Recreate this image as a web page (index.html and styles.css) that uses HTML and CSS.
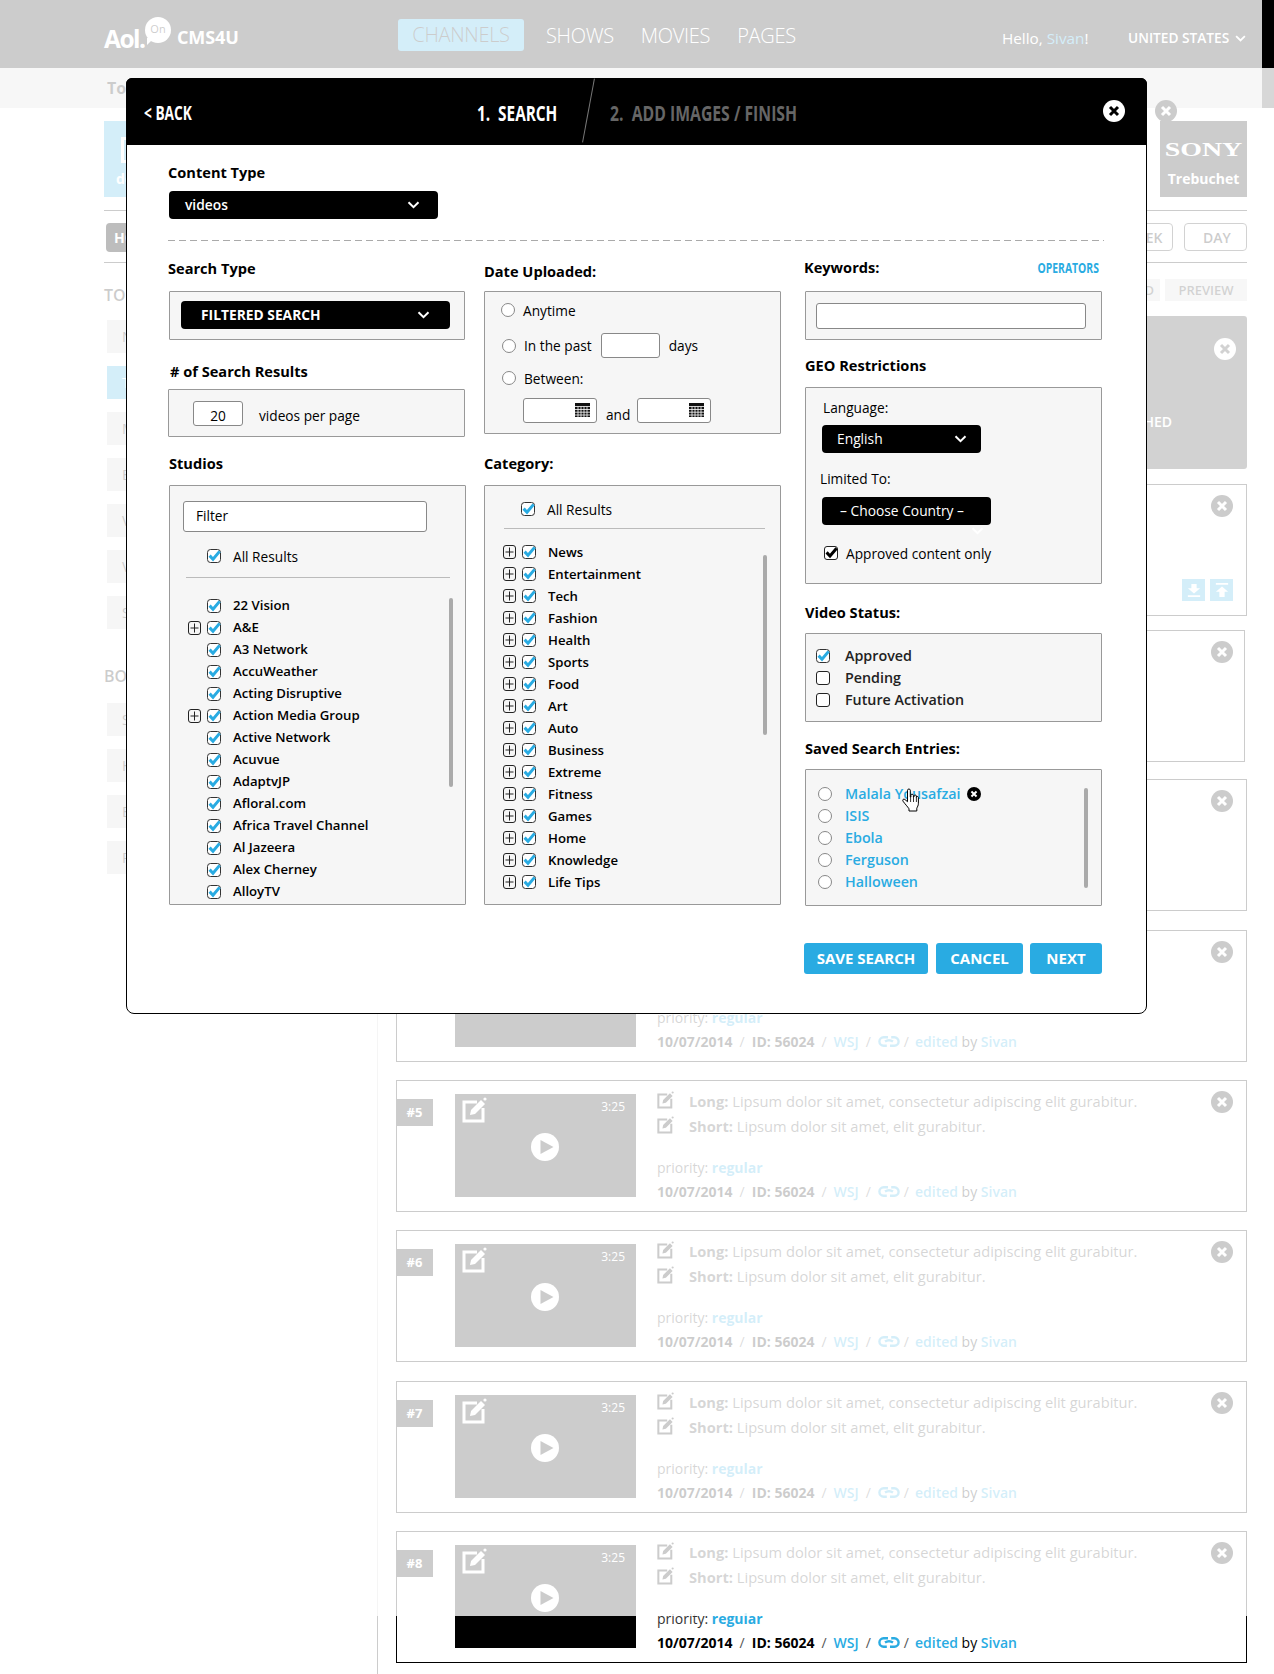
FILE: index.html
```html
<!DOCTYPE html>
<html lang="en">
<head>
<meta charset="utf-8">
<title>CMS4U</title>
<link rel="stylesheet" href="styles.css">
</head>
<body>
<svg class="defs" width="0" height="0" aria-hidden="true">
  <symbol id="chev" viewBox="0 0 12 8"><path d="M1 1.2l5 5 5-5" fill="none" stroke="currentColor" stroke-width="2"/></symbol>
  <symbol id="chk" viewBox="0 0 14 14"><rect x=".5" y=".5" width="13" height="13" rx="3" fill="#fff" stroke="#333"/><path d="M2.6 6.6l3.4 3.6 6.6-7.8" fill="none" stroke="#29abe2" stroke-width="3"/></symbol>
  <symbol id="chkb" viewBox="0 0 14 14"><rect x=".5" y=".5" width="13" height="13" rx="2.5" fill="#fff" stroke="#222"/><path d="M2.6 6.4l3.4 3.6 6.6-7.8" fill="none" stroke="#000" stroke-width="3"/></symbol>
  <symbol id="plus" viewBox="0 0 13 14"><rect x=".5" y=".5" width="12" height="13" rx="2.5" fill="none" stroke="#222"/><path d="M6.5 2.5v9M2.5 7h8" stroke="#222"/></symbol>
  <symbol id="cal" viewBox="0 0 15 14"><rect width="15" height="14" fill="#111"/><path d="M0 3.5h15M0 6.5h15M0 9.2h15M0 12h15M3 3.5V14M6 3.5V14M9 3.5V14M12 3.5V14" stroke="#fff" stroke-width=".8"/></symbol>
  <symbol id="close" viewBox="0 0 22 22"><circle cx="11" cy="11" r="11" fill="currentColor"/><path d="M7 7l8 8M15 7l-8 8" stroke="var(--x,#fff)" stroke-width="3"/></symbol>
  <symbol id="edit" viewBox="0 0 25 26"><path d="M15 5H2v19h19V11" fill="none" stroke="currentColor" stroke-width="3"/><path d="M8 18l1-5L19 3l4 4-10 10z" fill="currentColor"/><circle cx="23" cy="2" r="1.6" fill="currentColor"/></symbol>
  <symbol id="play" viewBox="0 0 28 28"><circle cx="14" cy="14" r="14" fill="#fff"/><path d="M9.500 7l13 7-13 7z" fill="#000"/></symbol>
  <symbol id="link" viewBox="0 0 22 11"><path d="M10 1.300H5.600a4.200 4.200 0 000 8.400h3.200M12 9.700h4.400a4.200 4.200 0 000-8.400h-3.200M7 5.500c3-2 5-2 8 0" fill="none" stroke="#29abe2" stroke-width="2.400"/></symbol>
  <symbol id="hand" viewBox="0 0 18 24"><path d="M5.500 2.200c0-1.600 2.800-1.600 2.800 0V9h.6V7.300c0-1.400 2.500-1.400 2.500 0V9h.6V8c0-1.300 2.400-1.300 2.400 0v1.200c0-1 2-1 2 .3v5.700c0 2.400-1 3.600-1.600 5V23H7v-2.200C5.500 18.500 3 16 1 13.200c-.9-1.400.6-2.800 1.900-1.700l2.600 2.200z" fill="#fff" stroke="#000"/><path d="M8.600 9v5M11.500 9v5M14.400 9v5" stroke="#000" stroke-width=".8"/></symbol>
  <symbol id="down" viewBox="0 0 16 16"><path d="M5 1h6v5h4l-7 6-7-6h4zM1 14h14v2H1z" fill="#fff"/></symbol>
  <symbol id="up" viewBox="0 0 16 16"><path d="M1 0h14v2H1zM8 4l7 6h-4v6H5v-6H1z" fill="#fff"/></symbol>
</svg>

<header class="topbar">
  <div class="logo">
    <span class="logo-aol">Aol.</span>
    <span class="logo-bubble">On</span>
    <span class="logo-cms">CMS4U</span>
  </div>
  <nav class="nav">
    <a class="nav-item nav-active">CHANNELS</a>
    <a class="nav-item">SHOWS</a>
    <a class="nav-item">MOVIES</a>
    <a class="nav-item">PAGES</a>
  </nav>
  <div class="hello">Hello, <span class="blue">Sivan</span>!</div>
  <div class="country">UNITED STATES <svg class="country-chev"><use href="#chev"/></svg></div>
</header>

<div class="subbar"><span>Top Stories</span></div>

<div class="strip">
  <div class="brand brand-active"><span class="brand-box"></span><span class="brand-name">default</span></div>
  <div class="brand brand-sony"><span class="sony">SONY</span><span class="brand-name">Trebuchet</span>
    <svg class="brand-close"><use href="#close"/></svg>
  </div>
</div>
<div class="tabs">
  <span class="pill">HOME</span>
  <span class="tab-right">
    <span class="outline outline-week">WEEK</span>
    <span class="outline outline-day">DAY</span>
  </span>
</div>

<main class="columns">
  <aside class="side">
    <h3 class="side-title">TOP</h3>
    <a class="side-item">News</a>
    <a class="side-item side-active">Tech</a>
    <a class="side-item">Movies</a>
    <a class="side-item">Ent</a>
    <a class="side-item">Video</a>
    <a class="side-item">Viral</a>
    <a class="side-item">Sports</a>
    <h3 class="side-title side-title-2">BOTTOM</h3>
    <a class="side-item">Style</a>
    <a class="side-item">Health</a>
    <a class="side-item">Eat</a>
    <a class="side-item">Recipes</a>
  </aside>

  <section class="feed">
    <div class="actions"><span class="action action-save">SAVED</span><span class="action action-preview">PREVIEW</span></div>
    <div class="hero"><svg class="hero-close"><use href="#close"/></svg><span class="hero-text">PUBLISHED</span></div>

    <article class="card card-first card-upload">
      <svg class="card-close"><use href="#close"/></svg>
      <span class="upload"><span class="upload-btn"><svg><use href="#down"/></svg></span><span class="upload-btn"><svg><use href="#up"/></svg></span></span>
    </article>
    <article class="card card-narrow gap-14">
      <svg class="card-close"><use href="#close"/></svg>
    </article>
    <article class="card gap-17">
      <svg class="card-close"><use href="#close"/></svg>
    </article>
    <article class="card gap-19">
      <div class="thumb thumb-covered"></div>
      <div class="info info-covered">
        <p class="priority">priority: <b class="blue">regular</b></p>
        <p class="meta"><b>10/07/2014</b><i>/</i><b>ID: 56024</b><i>/</i><b class="blue">WSJ</b><i>/</i><svg class="meta-link"><use href="#link"/></svg><i class="tight">/</i><b class="blue">edited</b>&nbsp;by&nbsp;<b class="blue">Sivan</b></p>
      </div>
      <svg class="card-close"><use href="#close"/></svg>
    </article>
    <article class="card">
      <span class="badge">#5</span>
      <div class="thumb"><svg class="thumb-edit"><use href="#edit"/></svg><span class="time">3:25</span><svg class="thumb-play"><use href="#play"/></svg></div>
      <div class="info">
        <p class="line"><svg class="line-edit"><use href="#edit"/></svg><b>Long:</b>&nbsp;Lipsum dolor sit amet, consectetur adipiscing elit gurabitur.</p>
        <p class="line"><svg class="line-edit"><use href="#edit"/></svg><b>Short:</b>&nbsp;Lipsum dolor sit amet, elit gurabitur.</p>
        <p class="priority">priority: <b class="blue">regular</b></p>
        <p class="meta"><b>10/07/2014</b><i>/</i><b>ID: 56024</b><i>/</i><b class="blue">WSJ</b><i>/</i><svg class="meta-link"><use href="#link"/></svg><i class="tight">/</i><b class="blue">edited</b>&nbsp;by&nbsp;<b class="blue">Sivan</b></p>
      </div>
      <svg class="card-close"><use href="#close"/></svg>
    </article>
    <article class="card">
      <span class="badge">#6</span>
      <div class="thumb"><svg class="thumb-edit"><use href="#edit"/></svg><span class="time">3:25</span><svg class="thumb-play"><use href="#play"/></svg></div>
      <div class="info">
        <p class="line"><svg class="line-edit"><use href="#edit"/></svg><b>Long:</b>&nbsp;Lipsum dolor sit amet, consectetur adipiscing elit gurabitur.</p>
        <p class="line"><svg class="line-edit"><use href="#edit"/></svg><b>Short:</b>&nbsp;Lipsum dolor sit amet, elit gurabitur.</p>
        <p class="priority">priority: <b class="blue">regular</b></p>
        <p class="meta"><b>10/07/2014</b><i>/</i><b>ID: 56024</b><i>/</i><b class="blue">WSJ</b><i>/</i><svg class="meta-link"><use href="#link"/></svg><i class="tight">/</i><b class="blue">edited</b>&nbsp;by&nbsp;<b class="blue">Sivan</b></p>
      </div>
      <svg class="card-close"><use href="#close"/></svg>
    </article>
    <article class="card gap-19">
      <span class="badge">#7</span>
      <div class="thumb"><svg class="thumb-edit"><use href="#edit"/></svg><span class="time">3:25</span><svg class="thumb-play"><use href="#play"/></svg></div>
      <div class="info">
        <p class="line"><svg class="line-edit"><use href="#edit"/></svg><b>Long:</b>&nbsp;Lipsum dolor sit amet, consectetur adipiscing elit gurabitur.</p>
        <p class="line"><svg class="line-edit"><use href="#edit"/></svg><b>Short:</b>&nbsp;Lipsum dolor sit amet, elit gurabitur.</p>
        <p class="priority">priority: <b class="blue">regular</b></p>
        <p class="meta"><b>10/07/2014</b><i>/</i><b>ID: 56024</b><i>/</i><b class="blue">WSJ</b><i>/</i><svg class="meta-link"><use href="#link"/></svg><i class="tight">/</i><b class="blue">edited</b>&nbsp;by&nbsp;<b class="blue">Sivan</b></p>
      </div>
      <svg class="card-close"><use href="#close"/></svg>
    </article>
    <article class="card">
      <span class="badge">#8</span>
      <div class="thumb"><svg class="thumb-edit"><use href="#edit"/></svg><span class="time">3:25</span><svg class="thumb-play"><use href="#play"/></svg></div>
      <div class="info">
        <p class="line"><svg class="line-edit"><use href="#edit"/></svg><b>Long:</b>&nbsp;Lipsum dolor sit amet, consectetur adipiscing elit gurabitur.</p>
        <p class="line"><svg class="line-edit"><use href="#edit"/></svg><b>Short:</b>&nbsp;Lipsum dolor sit amet, elit gurabitur.</p>
        <p class="priority">priority: <b class="blue">regular</b></p>
        <p class="meta"><b>10/07/2014</b><i>/</i><b>ID: 56024</b><i>/</i><b class="blue">WSJ</b><i>/</i><svg class="meta-link"><use href="#link"/></svg><i class="tight">/</i><b class="blue">edited</b>&nbsp;by&nbsp;<b class="blue">Sivan</b></p>
      </div>
      <svg class="card-close"><use href="#close"/></svg>
    </article>
  </section>
</main>

<div class="overlay"></div>

<div class="modal">
  <div class="modal-head">
    <a class="back">&lt; BACK</a>
    <span class="step step-1">1.&nbsp; SEARCH</span>
    <span class="step-sep"></span>
    <span class="step step-2">2.&nbsp; ADD IMAGES / FINISH</span>
    <svg class="modal-close"><use href="#close"/></svg>
  </div>

  <div class="modal-body">
    <h4 class="label label-content">Content Type</h4>
    <div class="select select-content"><span>videos</span><svg class="chev"><use href="#chev"/></svg></div>
    <div class="dash"></div>

    <div class="cols">
      <div class="col col-1">
        <h4 class="label mt-17">Search Type</h4>
        <div class="panel panel-search">
          <div class="select select-filter"><span>FILTERED SEARCH</span><svg class="chev"><use href="#chev"/></svg></div>
        </div>
        <h4 class="label label-results">#&nbsp;of Search Results</h4>
        <div class="panel panel-results">
          <span class="input input-num">20</span><span class="per-page">videos per page</span>
        </div>
        <h4 class="label label-studios">Studios</h4>
        <div class="panel panel-list panel-studios">
          <span class="input input-filter">Filter</span>
          <div class="row row-plain all-studios"><svg class="check"><use href="#chk"/></svg><span>All Results</span></div>
          <div class="rule rule-studios"></div>
          <div class="tree tree-studios">
            <div class="row"><i class="plus-gap"></i><svg class="check"><use href="#chk"/></svg><span>22 Vision</span></div>
            <div class="row"><svg class="plus"><use href="#plus"/></svg><svg class="check"><use href="#chk"/></svg><span>A&amp;E</span></div>
            <div class="row"><i class="plus-gap"></i><svg class="check"><use href="#chk"/></svg><span>A3 Network</span></div>
            <div class="row"><i class="plus-gap"></i><svg class="check"><use href="#chk"/></svg><span>AccuWeather</span></div>
            <div class="row"><i class="plus-gap"></i><svg class="check"><use href="#chk"/></svg><span>Acting Disruptive</span></div>
            <div class="row"><svg class="plus"><use href="#plus"/></svg><svg class="check"><use href="#chk"/></svg><span>Action Media Group</span></div>
            <div class="row"><i class="plus-gap"></i><svg class="check"><use href="#chk"/></svg><span>Active Network</span></div>
            <div class="row"><i class="plus-gap"></i><svg class="check"><use href="#chk"/></svg><span>Acuvue</span></div>
            <div class="row"><i class="plus-gap"></i><svg class="check"><use href="#chk"/></svg><span>AdaptvJP</span></div>
            <div class="row"><i class="plus-gap"></i><svg class="check"><use href="#chk"/></svg><span>Afloral.com</span></div>
            <div class="row"><i class="plus-gap"></i><svg class="check"><use href="#chk"/></svg><span>Africa Travel Channel</span></div>
            <div class="row"><i class="plus-gap"></i><svg class="check"><use href="#chk"/></svg><span>Al Jazeera</span></div>
            <div class="row"><i class="plus-gap"></i><svg class="check"><use href="#chk"/></svg><span>Alex Cherney</span></div>
            <div class="row"><i class="plus-gap"></i><svg class="check"><use href="#chk"/></svg><span>AlloyTV</span></div>
            <b class="scroll scroll-studios"></b>
          </div>
        </div>
      </div>

      <div class="col col-2">
        <h4 class="label mt-20">Date Uploaded:</h4>
        <div class="panel panel-date">
          <div class="date-row date-any"><span class="radio"></span><span>Anytime</span></div>
          <div class="date-row date-past"><span class="radio"></span><span>In the past</span><span class="input input-days"></span><span class="days">days</span></div>
          <div class="date-row date-between"><span class="radio"></span><span>Between:</span></div>
          <div class="date-row date-range">
            <span class="input input-date"><svg class="cal"><use href="#cal"/></svg></span>
            <span class="and">and</span>
            <span class="input input-date"><svg class="cal"><use href="#cal"/></svg></span>
          </div>
        </div>
        <h4 class="label label-category">Category:</h4>
        <div class="panel panel-list panel-category">
          <div class="row row-plain all-category"><svg class="check"><use href="#chk"/></svg><span>All Results</span></div>
          <div class="rule rule-category"></div>
          <div class="tree tree-category">
            <div class="row"><svg class="plus"><use href="#plus"/></svg><svg class="check"><use href="#chk"/></svg><span>News</span></div>
            <div class="row"><svg class="plus"><use href="#plus"/></svg><svg class="check"><use href="#chk"/></svg><span>Entertainment</span></div>
            <div class="row"><svg class="plus"><use href="#plus"/></svg><svg class="check"><use href="#chk"/></svg><span>Tech</span></div>
            <div class="row"><svg class="plus"><use href="#plus"/></svg><svg class="check"><use href="#chk"/></svg><span>Fashion</span></div>
            <div class="row"><svg class="plus"><use href="#plus"/></svg><svg class="check"><use href="#chk"/></svg><span>Health</span></div>
            <div class="row"><svg class="plus"><use href="#plus"/></svg><svg class="check"><use href="#chk"/></svg><span>Sports</span></div>
            <div class="row"><svg class="plus"><use href="#plus"/></svg><svg class="check"><use href="#chk"/></svg><span>Food</span></div>
            <div class="row"><svg class="plus"><use href="#plus"/></svg><svg class="check"><use href="#chk"/></svg><span>Art</span></div>
            <div class="row"><svg class="plus"><use href="#plus"/></svg><svg class="check"><use href="#chk"/></svg><span>Auto</span></div>
            <div class="row"><svg class="plus"><use href="#plus"/></svg><svg class="check"><use href="#chk"/></svg><span>Business</span></div>
            <div class="row"><svg class="plus"><use href="#plus"/></svg><svg class="check"><use href="#chk"/></svg><span>Extreme</span></div>
            <div class="row"><svg class="plus"><use href="#plus"/></svg><svg class="check"><use href="#chk"/></svg><span>Fitness</span></div>
            <div class="row"><svg class="plus"><use href="#plus"/></svg><svg class="check"><use href="#chk"/></svg><span>Games</span></div>
            <div class="row"><svg class="plus"><use href="#plus"/></svg><svg class="check"><use href="#chk"/></svg><span>Home</span></div>
            <div class="row"><svg class="plus"><use href="#plus"/></svg><svg class="check"><use href="#chk"/></svg><span>Knowledge</span></div>
            <div class="row"><svg class="plus"><use href="#plus"/></svg><svg class="check"><use href="#chk"/></svg><span>Life Tips</span></div>
            <b class="scroll scroll-category"></b>
          </div>
        </div>
      </div>

      <div class="col col-3">
        <div class="keywords-head"><h4 class="label">Keywords:</h4><a class="operators">OPERATORS</a></div>
        <div class="panel panel-keywords"><span class="input input-keywords"></span></div>
        <h4 class="label label-geo">GEO Restrictions</h4>
        <div class="panel panel-geo">
          <div class="geo-lang">Language:</div>
          <div class="select select-lang"><span>English</span><svg class="chev"><use href="#chev"/></svg></div>
          <div class="geo-limit">Limited To:</div>
          <div class="select select-country"><span>– Choose Country –</span><svg class="chev chev-under"><use href="#chev"/></svg></div>
          <div class="geo-approved"><svg class="check"><use href="#chkb"/></svg><span>Approved content only</span></div>
        </div>
        <h4 class="label label-status">Video Status:</h4>
        <div class="panel panel-status">
          <div class="status-row"><svg class="check"><use href="#chk"/></svg><span>Approved</span></div>
          <div class="status-row"><b class="box"></b><span>Pending</span></div>
          <div class="status-row"><b class="box"></b><span>Future Activation</span></div>
        </div>
        <h4 class="label label-saved">Saved Search Entries:</h4>
        <div class="panel panel-saved">
          <div class="saved-row"><b class="radio"></b><a>Malala Yousafzai</a><svg class="saved-close"><use href="#close"/></svg></div>
          <div class="saved-row"><b class="radio"></b><a>ISIS</a></div>
          <div class="saved-row"><b class="radio"></b><a>Ebola</a></div>
          <div class="saved-row"><b class="radio"></b><a>Ferguson</a></div>
          <div class="saved-row"><b class="radio"></b><a>Halloween</a></div>
          <b class="scroll scroll-saved"></b>
          <svg class="cursor"><use href="#hand"/></svg>
        </div>
        <div class="buttons">
          <a class="btn btn-save">SAVE SEARCH</a>
          <a class="btn btn-cancel">CANCEL</a>
          <a class="btn btn-next">NEXT</a>
        </div>
      </div>
    </div>
  </div>
</div>
</body>
</html>
```
FILE: styles.css
```css
* { box-sizing: border-box; }
html, body { margin: 0; padding: 0; }
body {
  position: relative;
  width: 1274px;
  height: 1674px;
  overflow: hidden;
  background: #fff;
  color: #000;
  font-family: "Open Sans", "Liberation Sans", sans-serif;
  font-size: 13.700px;
}
h3, h4, p { margin: 0; }
a { color: inherit; text-decoration: none; }
.defs { position: absolute; }
.blue { color: #29abe2; }

/* page behind the dialog */
.topbar {
  display: flex;
  align-items: center;
  height: 68px;
  padding-left: 104px;
  background: #000;
  color: #fff;
}
.logo { position: relative; display: flex; align-items: center; width: 294px; height: 36px; }
.logo-aol {
  flex: none;
  width: 73px;
  margin-top: 8px;
  font-size: 24.500px;
  font-weight: 700;
  letter-spacing: -1.500px;
}
.logo-bubble {
  position: absolute;
  left: 41px;
  top: 1px;
  width: 26px;
  height: 26px;
  border-radius: 50%;
  background: #fff;
  color: #000;
  font-size: 11px;
  line-height: 24px;
  text-align: center;
}
.logo-bubble::after {
  content: "";
  position: absolute;
  left: 2px;
  bottom: -2px;
  border-top: 7px solid #fff;
  border-right: 7px solid transparent;
}
.logo-cms { margin-top: 6px; font-size: 18px; font-weight: 700; letter-spacing: -.1px; }
.nav { display: flex; align-items: center; }
.nav-item { margin-top: 3px; margin-right: 27px; font-size: 20px; font-weight: 300; letter-spacing: -.3px; }
.nav-active {
  width: 126px;
  height: 32px;
  margin-top: 2px;
  margin-right: 22px;
  border-radius: 3px;
  background: #29abe2;
  color: #000;
  line-height: 32px;
  text-align: center;
}
.hello { position: absolute; left: 1002px; top: 28px; font-size: 15.300px; line-height: 20px; }
.country {
  position: absolute;
  left: 1128px;
  top: 28px;
  font-size: 13.700px;
  font-weight: 600;
  line-height: 20px;
  white-space: nowrap;
}
.country-chev { width: 11px; height: 7px; margin-left: 2px; vertical-align: 1px; }

.subbar {
  height: 40px;
  padding-left: 107px;
  background: #d7d7d7;
  color: #000;
  font-size: 16px;
  font-weight: 700;
  line-height: 40px;
}

.strip {
  display: flex;
  justify-content: space-between;
  width: 1143px;
  height: 90px;
  margin: 13px 0 0 104px;
  padding-bottom: 13px;
  border-bottom: 1px solid #000;
}
.brand { position: relative; height: 76px; background: #000; color: #fff; text-align: center; }
.brand-active { width: 90px; background: #29abe2; }
.brand-box { position: absolute; left: 17px; top: 16px; width: 30px; height: 26px; border: 3px solid #fff; }
.brand-name { position: absolute; left: 0; right: 0; bottom: 9px; font-size: 14px; font-weight: 700; }
.brand-active .brand-name { padding-left: 12px; text-align: left; }
.brand-sony { width: 87px; box-shadow: -13px 0 0 0 #fff, -17px 0 0 0 #000; }
.sony {
  display: block;
  margin-top: 18px;
  font-family: "Liberation Serif", serif;
  font-size: 19px;
  font-weight: 700;
  line-height: 22px;
  transform: scaleX(1.470);
}
.brand-close { position: absolute; left: -5px; top: -21px; width: 22px; height: 22px; color: #000; }

.tabs {
  display: flex;
  justify-content: space-between;
  align-items: flex-start;
  width: 1143px;
  height: 52px;
  margin-left: 104px;
  padding: 12px 0 0 2px;
  border-bottom: 1px solid #000;
}
.pill {
  position: relative;
  z-index: 2;
  width: 80px;
  height: 29px;
  padding-left: 8px;
  border-radius: 4px;
  background: #bdbdbd;
  color: #fff;
  font-size: 14px;
  font-weight: 700;
  line-height: 29px;
}
.tab-right { display: flex; gap: 11px; }
.outline {
  width: 63px;
  height: 28px;
  border: 1px solid #222;
  border-radius: 4px;
  color: #000;
  font-size: 14px;
  font-weight: 600;
  line-height: 28px;
  text-align: center;
}
.outline-week { padding-left: 4px; }
.outline-day { padding-left: 3px; }

.columns { display: flex; align-items: flex-start; }
.side { width: 274px; height: 1411px; margin-left: 104px; padding-left: 3px; border-right: 1px solid #ccc; }
.side-title { margin: 21px 0 14px -3px; font-size: 16px; font-weight: 600; line-height: 22px; }
.side-title-2 { margin-top: 36px; margin-bottom: 16px; }
.side-item {
  display: block;
  width: 200px;
  height: 33px;
  margin-bottom: 13px;
  padding-left: 15px;
  background: #d0d0d0;
  color: #000;
  font-size: 14px;
  line-height: 33px;
}
.side-active { background: #29abe2; color: #fff; }

.feed { width: 851px; margin-left: 18px; padding-top: 16px; }
.actions { display: flex; justify-content: flex-end; gap: 5px; }
.action {
  height: 22px;
  background: #d7d7d7;
  color: #222;
  font-size: 13px;
  font-weight: 600;
  line-height: 22px;
  text-align: center;
}
.action-save { width: 70px; padding-right: 6px; text-align: right; }
.action-preview { width: 82px; }
.hero {
  position: relative;
  height: 153px;
  margin-top: 15px;
  border-radius: 3px;
  background: #222;
  color: #fff;
}
.hero-close { position: absolute; right: 11px; top: 22px; width: 22px; height: 22px; color: #fff; --x: #222; }
.hero-text { position: absolute; right: 75px; top: 96px; font-size: 14px; font-weight: 600; line-height: 20px; }

.card {
  position: relative;
  display: flex;
  align-items: flex-start;
  height: 132px;
  margin-top: 18px;
  border: 1px solid #000;
}
.card-first { margin-top: 15px; }
.card-narrow { margin-right: 2px; }
.gap-14 { margin-top: 14px; }
.gap-17 { margin-top: 17px; }
.gap-19 { margin-top: 19px; }
.badge {
  width: 37px;
  height: 27px;
  margin: 18px 0 0 -1px;
  background: #000;
  color: #fff;
  font-size: 13px;
  font-weight: 700;
  line-height: 27px;
  text-align: center;
}
.thumb {
  position: relative;
  flex: none;
  width: 181px;
  height: 103px;
  margin: 13px 0 0 22px;
  background: #000;
}
.thumb-covered { margin-left: 58px; }
.thumb-edit { position: absolute; left: 7px; top: 3px; width: 25px; height: 26px; color: #fff; }
.time { position: absolute; right: 11px; top: 4px; color: #fff; font-size: 12px; line-height: 18px; }
.thumb-play { position: absolute; left: 76px; top: 39px; width: 28px; height: 28px; }
.info { flex: none; width: 510px; margin-left: 21px; }
.info-covered { padding-top: 59px; }
.line {
  display: flex;
  align-items: center;
  height: 25px;
  color: #333;
  font-size: 14.670px;
  white-space: nowrap;
}
.line:first-child { margin-top: 7px; }
.line-edit { flex: none; width: 17px; height: 18px; margin: -2px 15px 0 0; color: #000; }
.priority { margin-top: 20px; color: #333; font-size: 14px; line-height: 20px; }
.info-covered .priority { margin-top: 18px; }
.priority b { font-weight: 700; }
.meta { display: flex; align-items: center; height: 20px; margin-top: 3px; color: #000; font-size: 14px; white-space: nowrap; }
.meta b.blue { font-weight: 600; }
.meta i { margin: 0 7px; color: #555; font-style: normal; }
.meta i.tight { margin: 0 6px 0 4px; }
.meta-link { width: 22px; height: 11px; }
.card-close { position: absolute; right: 13px; top: 10px; width: 22px; height: 22px; color: #000; }
.card-narrow .card-close { right: 11px; }
.upload { position: absolute; right: 13px; top: 94px; display: flex; gap: 5px; }
.upload-btn { display: flex; align-items: center; justify-content: center; width: 23px; height: 22px; background: #29abe2; }
.upload-btn svg { width: 14px; height: 14px; }

.overlay {
  position: absolute;
  left: 0;
  top: 0;
  z-index: 1;
  width: 1262px;
  height: 1616px;
  background: rgba(255, 255, 255, .8);
}

/* dialog */
.modal {
  position: absolute;
  left: 126px;
  top: 78px;
  z-index: 3;
  width: 1021px;
  height: 936px;
  border: 1px solid #000;
  border-radius: 6px 6px 8px 8px;
  background: #fff;
}
.modal-head {
  position: relative;
  display: flex;
  align-items: center;
  height: 67px;
  margin: -1px -1px 0;
  padding: 3px 0 0 18px;
  border-radius: 6px 6px 0 0;
  background: #000;
  color: #fff;
}
.back, .step {
  flex: none;
  font-weight: 700;
  white-space: nowrap;
  transform-origin: 0 50%;
}
.back { width: 67px; margin-right: 266px; font-size: 19px; transform: scaleX(.72); }
.step { font-size: 21px; }
.step-1 { width: 110px; transform: scaleX(.73); }
.step-2 { color: #666; transform: scaleX(.75); }
.step-sep {
  flex: none;
  align-self: flex-start;
  width: 1px;
  height: 65px;
  margin: -3px 21px 0 1px;
  background: #777;
  transform: rotate(10.500deg);
}
.modal-close { position: absolute; right: 22px; top: 22px; width: 22px; height: 22px; color: #fff; --x: #000; }

.modal-body { padding-left: 41px; }
.label { color: #000; font-size: 14.600px; font-weight: 700; line-height: 20px; white-space: nowrap; }
.label-content { height: 37px; padding-top: 17px; }
.select {
  position: relative;
  display: flex;
  align-items: center;
  height: 28px;
  padding-bottom: 2px;
  border-radius: 4px;
  background: #000;
  color: #fff;
  font-size: 13.800px;
}
.chev { position: absolute; width: 13px; height: 8px; color: #fff; }
.select-content { width: 269px; margin: 9px 0 0 1px; padding-left: 16px; font-weight: 600; }
.select-content .chev { left: 238px; top: 10px; }
.dash {
  width: 936px;
  height: 1px;
  margin-top: 21px;
  background: repeating-linear-gradient(90deg, #aaa 0 7px, transparent 7px 11px);
}

.cols { display: flex; }
.col { display: flex; flex-direction: column; }
.col-1 { width: 298px; }
.col-2 { width: 298px; margin-left: 18px; }
.col-3 { width: 298px; margin-left: 22px; }
.mt-17 { margin-top: 17px; }
.mt-20 { margin-top: 20px; }

.panel { position: relative; border: 1px solid #999; border-radius: 1px; background: #f6f6f6; }
.input {
  display: block;
  border: 1px solid #888;
  border-radius: 3px;
  background: #fff;
}

.panel-search { width: 296px; height: 49px; margin: 13px 0 0 1px; padding: 9px 0 0 11px; }
.select-filter { width: 269px; padding-left: 20px; font-weight: 700; }
.select-filter .chev { left: 236px; top: 10px; }
.label-results { margin: 21px 0 0 2px; }
.panel-results { display: flex; align-items: center; width: 297px; height: 48px; margin-top: 8px; padding-left: 24px; }
.input-num { width: 50px; height: 25px; line-height: 27px; text-align: center; }
.per-page { margin-left: 16px; padding-top: 4px; }
.label-studios { margin: 16px 0 0 1px; }
.panel-list { height: 420px; margin-top: 12px; overflow: hidden; }
.panel-studios { width: 297px; margin-left: 1px; }
.input-filter { width: 244px; height: 31px; margin: 15px 0 0 13px; padding-left: 12px; line-height: 27px; }

.row { display: flex; align-items: center; height: 22px; font-size: 13.200px; font-weight: 600; white-space: nowrap; }
.tree-studios span, .status-row span, .saved-row a { padding-bottom: 2px; }
.row-plain { font-size: 13.700px; font-weight: 400; }
.check { flex: none; width: 14px; height: 14px; margin-right: 12px; }
.plus { flex: none; width: 13px; height: 14px; margin-right: 6px; }
.plus-gap { flex: none; width: 19px; }
.all-studios { margin: 13px 0 0 37px; }
.rule { border-top: 1px solid #bbb; }
.rule-studios { width: 264px; margin: 10px 0 0 16px; }
.tree { position: relative; padding-left: 18px; }
.tree-studios { margin-top: 17px; }
.scroll { position: absolute; border-radius: 2px; background: #aaa; }
.scroll-studios { left: 279px; top: 3px; width: 4px; height: 189px; }

.panel-date { width: 297px; height: 143px; margin-top: 10px; }
.date-row { display: flex; align-items: center; }
.radio {
  flex: none;
  display: block;
  width: 14px;
  height: 14px;
  margin-right: 8px;
  border: 1px solid #888;
  border-radius: 50%;
  background: #fff;
}
.date-any { height: 22px; margin-top: 7px; padding-left: 16px; }
.date-past { height: 25px; margin-top: 12px; padding-left: 17px; }
.input-days { width: 59px; height: 25px; margin-left: 9px; }
.days { margin-left: 9px; }
.date-between { height: 22px; margin-top: 9px; padding-left: 17px; }
.date-range { margin-top: 7px; padding-left: 38px; }
.input-date { display: flex; justify-content: flex-end; width: 74px; height: 25px; padding: 4px 6px 0 0; }
.cal { width: 15px; height: 14px; }
.and { width: 40px; padding-top: 9px; padding-left: 9px; }
.label-category { margin-top: 19px; }
.panel-category { width: 297px; }
.all-category { margin: 12px 0 0 36px; }
.rule-category { width: 261px; margin: 8px 0 0 19px; }
.tree-category { margin-top: 12px; }
.scroll-category { left: 278px; top: 14px; width: 4px; height: 180px; }

.keywords-head { display: flex; justify-content: space-between; align-items: center; width: 295px; margin-top: 16px; }
.operators {
  color: #29abe2;
  font-size: 14px;
  font-weight: 700;
  transform: scaleX(.74);
  transform-origin: 100% 50%;
}
.panel-keywords { width: 297px; height: 49px; margin: 14px 0 0 1px; padding: 11px 0 0 10px; }
.input-keywords { width: 270px; height: 26px; }
.label-geo { margin: 15px 0 0 1px; }
.panel-geo { width: 297px; height: 197px; margin: 12px 0 0 1px; }
.geo-lang { margin: 10px 0 0 17px; line-height: 20px; }
.select-lang { width: 159px; margin: 7px 0 0 16px; padding-left: 15px; }
.select-lang .chev { left: 132px; top: 10px; }
.geo-limit { margin: 16px 0 0 14px; line-height: 20px; }
.select-country { width: 169px; margin: 8px 0 0 16px; padding-left: 18px; }
.chev-under { left: 149px; top: 30px; }
.geo-approved { display: flex; align-items: center; height: 22px; margin: 17px 0 0 18px; }
.geo-approved .check { margin-right: 8px; }
.label-status { margin: 18px 0 0 1px; }
.panel-status { width: 297px; height: 89px; margin: 11px 0 0 1px; padding: 11px 0 0 10px; }
.status-row { display: flex; align-items: center; height: 22px; color: #222; font-size: 14.300px; font-weight: 600; }
.status-row .check { margin-right: 15px; }
.box { flex: none; width: 14px; height: 14px; margin-right: 15px; border: 1px solid #222; border-radius: 3px; background: #fff; }
.label-saved { margin: 16px 0 0 1px; }
.panel-saved { width: 297px; height: 137px; margin: 11px 0 0 1px; padding: 13px 0 0 12px; }
.saved-row { display: flex; align-items: center; height: 22px; color: #29abe2; font-size: 14.300px; font-weight: 600; }
.saved-row .radio { margin-right: 13px; }
.saved-close { width: 14px; height: 14px; margin-left: 6px; color: #000; --x: #fff; }
.scroll-saved { left: 278px; top: 18px; width: 4px; height: 100px; }
.cursor { position: absolute; left: 96px; top: 18px; width: 18px; height: 24px; }
.buttons { display: flex; margin-top: 37px; }
.btn {
  display: block;
  height: 31px;
  border-radius: 3px;
  background: #29abe2;
  color: #fff;
  font-size: 15px;
  font-weight: 700;
  line-height: 31px;
  text-align: center;
}
.btn-save { width: 124px; }
.btn-cancel { width: 87px; margin-left: 8px; }
.btn-next { width: 72px; margin-left: 7px; }
```
